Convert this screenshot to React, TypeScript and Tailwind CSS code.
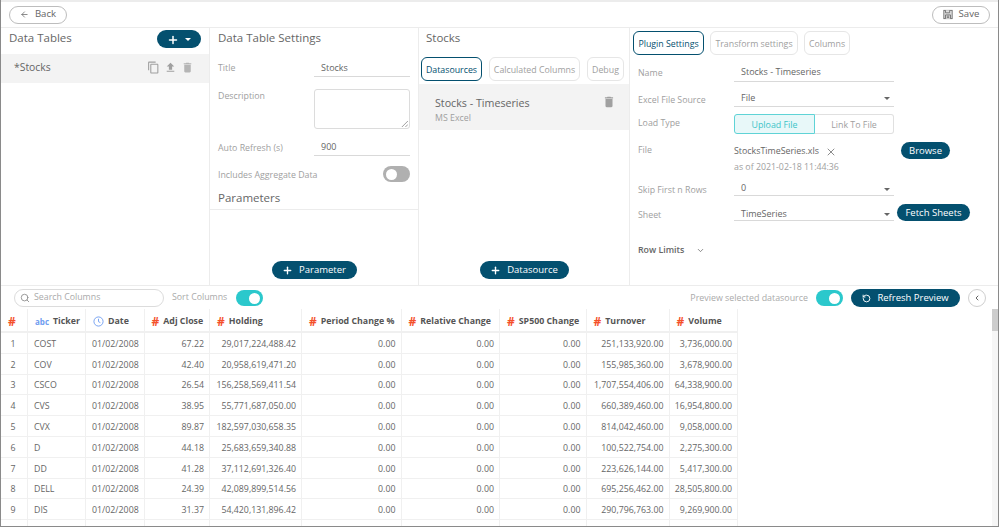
import React from "react";
import { Search, ArrowLeft, Plus, RotateCcw, ChevronLeft, ChevronDown, X } from "lucide-react";

const Mat = ({ d, className }: { d: string; className?: string }) => (
  <svg viewBox="0 0 24 24" className={className} fill="currentColor"><path d={d} /></svg>
);
const COPY = "M16 1H4c-1.1 0-2 .9-2 2v14h2V3h12V1zm3 4H8c-1.1 0-2 .9-2 2v14c0 1.1.9 2 2 2h11c1.1 0 2-.9 2-2V7c0-1.1-.9-2-2-2zm0 16H8V7h11v14z";
const UPLOAD = "M9 16h6v-6h4l-7-7-7 7h4zm-4 2h14v2H5z";
const TRASH = "M6 19c0 1.1.9 2 2 2h8c1.1 0 2-.9 2-2V7H6v12zM19 4h-3.5l-1-1h-5l-1 1H5v2h14V4z";

const Caret = ({ className = "" }: { className?: string }) => (
  <span className={`w-0 h-0 border-l-[3.5px] border-r-[3.5px] border-t-[3.5px] border-l-transparent border-r-transparent border-t-[#666] ${className}`} />
);

const Btn = ({ children, className = "" }: { children: React.ReactNode; className?: string }) => (
  <div className={`rounded-full bg-[#04506f] text-white text-[9.5px] whitespace-nowrap flex items-center justify-center shrink-0 pt-[1px] ${className}`}>{children}</div>
);

const Tab = ({ children, active, className = "" }: { children: React.ReactNode; active?: boolean; className?: string }) => (
  <div className={`h-[24px] rounded-[6px] flex items-center justify-center whitespace-nowrap text-[8.8px] shrink-0 pt-[3px] ${active ? "border-[1.5px] border-[#04506f] text-[#04506f]" : "border border-[#e6e6e6] text-[#a0a0a0]"} ${className}`}>{children}</div>
);

const Toggle = ({ on }: { on?: boolean }) => (
  <div className={`w-[27px] h-[16px] rounded-full flex items-center px-[3px] shrink-0 ${on ? "bg-[#2bc8cc] justify-end" : "bg-[#b0b0b0] justify-start"}`}>
    <div className="w-[11px] h-[11px] rounded-full bg-white" />
  </div>
);

const widths = [27, 58, 58.5, 65.5, 92, 99.5, 98.5, 86.5, 83, 68.5];
const heads = ["", "Ticker", "Date", "Adj Close", "Holding", "Period Change %", "Relative Change", "SP500 Change", "Turnover", "Volume"];
const rows = [
  ["1", "COST", "67.22", "29,017,224,488.42", "251,133,920.00", "3,736,000.00"],
  ["2", "COV", "42.40", "20,958,619,471.20", "155,985,360.00", "3,678,900.00"],
  ["3", "CSCO", "26.54", "156,258,569,411.54", "1,707,554,406.00", "64,338,900.00"],
  ["4", "CVS", "38.95", "55,771,687,050.00", "660,389,460.00", "16,954,800.00"],
  ["5", "CVX", "89.87", "182,597,030,658.35", "814,042,460.00", "9,058,000.00"],
  ["6", "D", "44.18", "25,683,659,340.88", "100,522,754.00", "2,275,300.00"],
  ["7", "DD", "41.28", "37,112,691,326.40", "223,626,144.00", "5,417,300.00"],
  ["8", "DELL", "24.39", "42,089,899,514.56", "695,256,462.00", "28,505,800.00"],
  ["9", "DIS", "31.37", "54,420,131,896.42", "290,796,763.00", "9,269,900.00"],
  ["", "", "", "", "", ""],
];

const HeadIcon = ({ i }: { i: number }) => {
  if (i === 1) return <span className="text-[#6f9df0] font-bold text-[8px] mr-[4px]">abc</span>;
  if (i === 2)
    return (
      <svg viewBox="0 0 12 12" className="w-[11px] h-[11px] mr-[4px] text-[#6f9df0]" fill="none" stroke="currentColor" strokeWidth="1">
        <circle cx="6" cy="6" r="5" />
        <path d="M6 3v3.2l2 1" />
      </svg>
    );
  return <span className={`text-[#f4502a] font-bold text-[12px] leading-none ${i === 0 ? "" : "mr-[4px]"}`}>#</span>;
};

const Label = ({ children, className = "" }: { children: React.ReactNode; className?: string }) => (
  <div className={`text-[8.8px] leading-[12px] text-[#a0a0a0] whitespace-nowrap shrink-0 ${className}`}>{children}</div>
);

const Field = ({ children, caret, className = "" }: { children: React.ReactNode; caret?: React.ReactNode; className?: string }) => (
  <div className={`border-b border-[#d9d9d9] flex items-center justify-between pl-[7px] pr-[4px] text-[9px] text-[#666] shrink-0 ${className}`}>
    <span>{children}</span>
    {caret}
  </div>
);

export default function App() {
  return (
    <div className="w-[999px] h-[527px] overflow-hidden bg-white border-l border-r border-b border-[#8a8a8a] flex flex-col text-[#555]" style={{ fontFamily: '"Open Sans", sans-serif' }}>
      {/* top bar */}
      <div className="h-[28px] shrink-0 border-t-2 border-b border-[#ececec] flex items-center justify-between pl-[8px] pr-[8px]">
        <div className="w-[58px] h-[18px] rounded-full border border-[#bdbdbd] flex items-center justify-center gap-[6px] text-[9.6px] text-[#666]">
          <ArrowLeft className="w-[9px] h-[9px]" strokeWidth={2} />
          Back
        </div>
        <div className="w-[58px] h-[18px] rounded-full border border-[#bdbdbd] flex items-center justify-center gap-[6px] text-[9.6px] text-[#666]">
          <svg viewBox="0 0 12 12" className="w-[10px] h-[11px]" fill="#e0e0e0" stroke="#666" strokeWidth="1">
            <rect x="1" y="1" width="10" height="10" />
            <path d="M3 1v3h5V1M3 11V6.5h6V11M4.5 8h3M4.5 9.5h3" />
          </svg>
          Save
        </div>
      </div>

      {/* panels */}
      <div className="h-[258px] shrink-0 flex border-b border-[#ececec]">
        <div className="w-[209px] shrink-0 border-r border-[#ececec] flex flex-col">
          <div className="h-[26px] flex items-start justify-between pl-[8px] pr-[8px]">
            <span className="text-[11.5px] leading-[20px] text-[#666]">Data Tables</span>
            <Btn className="w-[44px] h-[18px] mt-[2px] gap-[6px]">
              <Plus className="w-[12px] h-[12px]" strokeWidth={3} />
              <span className="w-0 h-0 border-l-[3px] border-r-[3px] border-t-[3px] border-l-transparent border-r-transparent border-t-white" />
            </Btn>
          </div>
          <div className="h-[29px] bg-[#f3f3f3] flex items-center justify-between pl-[13px] pr-[15px] pb-[1px]">
            <span className="text-[10.4px] text-[#666]">*Stocks</span>
            <div className="flex items-center gap-[4px] text-[#a0a0a0] -mt-[2px]">
              <Mat d={COPY} className="w-[13px] h-[13px]" />
              <Mat d={UPLOAD} className="w-[13px] h-[13px]" />
              <Mat d={TRASH} className="w-[13px] h-[13px] text-[#b5b5b5]" />
            </div>
          </div>
        </div>

        <div className="w-[209px] shrink-0 border-r border-[#ececec] flex flex-col">
          <div className="h-[20px] flex items-center pl-[8px] text-[11.5px] text-[#666]">Data Table Settings</div>
          <div className="pl-[8px] pr-[8px] flex flex-col">
            <div className="h-[24px] mt-[5px] flex items-center justify-between">
              <Label className="pt-[5px]">Title</Label>
              <Field className="w-[96px] h-[24px] pt-[6px]">Stocks</Field>
            </div>
            <div className="mt-[12px] flex justify-between">
              <Label className="pt-[1px]">Description</Label>
              <div className="w-[96px] h-[40px] border border-[#dcdcdc] rounded-[3px] relative">
                <svg viewBox="0 0 8 8" className="absolute right-[1px] bottom-[1px] w-[7px] h-[7px]" stroke="#777" strokeWidth="0.8">
                  <path d="M1 8L8 1M5 8L8 5" />
                </svg>
              </div>
            </div>
            <div className="mt-[3px] h-[24px] flex items-center justify-between">
              <Label className="pt-[8px]">Auto Refresh (s)</Label>
              <Field className="w-[96px] h-[24px] pt-[7px]">900</Field>
            </div>
            <div className="mt-[10px] flex items-center justify-between h-[16px]">
              <Label className="pt-[2px]">Includes Aggregate Data</Label>
              <Toggle />
            </div>
          </div>
          <div className="h-[24px] mt-[4px] border-b border-[#ececec] flex items-center pl-[8px] text-[11.5px] text-[#666]">Parameters</div>
          <div className="flex-1 flex items-end justify-center pb-[6px]">
            <Btn className="w-[85px] h-[18px] gap-[6px]">
              <Plus className="w-[11px] h-[11px]" strokeWidth={3} />
              Parameter
            </Btn>
          </div>
        </div>

        <div className="w-[211px] shrink-0 border-r border-[#ececec] flex flex-col">
          <div className="h-[20px] flex items-center pl-[7px] text-[11.5px] text-[#666]">Stocks</div>
          <div className="flex gap-[7px] pl-[2px] mt-[9px] h-[24px]">
            <Tab active className="w-[61px]">Datasources</Tab>
            <Tab className="w-[91px]">Calculated Columns</Tab>
            <Tab className="w-[37px]">Debug</Tab>
          </div>
          <div className="mt-[3px] h-[46px] bg-[#f3f3f3] flex justify-between pl-[16px] pr-[13px] pt-[11px]">
            <div className="flex flex-col">
              <span className="text-[10.7px] leading-[16px] text-[#666]">Stocks - Timeseries</span>
              <span className="text-[8.8px] leading-[13px] pt-[1px] text-[#a0a0a0]">MS Excel</span>
            </div>
            <Mat d={TRASH} className="w-[14px] h-[14px] text-[#a0a0a0]" />
          </div>
          <div className="flex-1 flex items-end justify-center pb-[6px]">
            <Btn className="w-[89px] h-[18px] gap-[6px]">
              <Plus className="w-[11px] h-[11px]" strokeWidth={3} />
              Datasource
            </Btn>
          </div>
        </div>

        <div className="flex-1 pl-[3px] pt-[3px] flex flex-col">
          <div className="flex gap-[6px] h-[24px]">
            <Tab active className="w-[71px]">Plugin Settings</Tab>
            <Tab className="w-[88px]">Transform settings</Tab>
            <Tab className="w-[46px]">Columns</Tab>
          </div>
          <div className="pl-[5px] flex flex-col">
            <div className="flex items-start h-[24px] mt-[3px]">
              <Label className="w-[96px] mt-[9px]">Name</Label>
              <Field className="w-[160px] h-[24px] pt-[4px]">Stocks - Timeseries</Field>
            </div>
            <div className="flex items-start h-[24px] mt-[1px]">
              <Label className="w-[96px] mt-[11px]">Excel File Source</Label>
              <Field caret={<Caret />} className="w-[160px] h-[24px] pt-[7px]">File</Field>
            </div>
            <div className="flex items-start h-[20px] mt-[7px]">
              <Label className="w-[96px] mt-[3px]">Load Type</Label>
              <div className="w-[160px] h-[20px] flex text-[8.85px] shrink-0">
                <div className="w-[81px] flex items-center justify-center bg-[#e8f8f9] border border-[#5fd3d6] rounded-l-[3px] text-[#3cc4c8] pt-[3px]">Upload File</div>
                <div className="flex-1 flex items-center justify-center border border-l-0 border-[#e0e0e0] rounded-r-[3px] text-[#a0a0a0] pt-[3px]">Link To File</div>
              </div>
            </div>
            <div className="flex items-start mt-[7px] h-[31px]">
              <Label className="w-[96px] mt-[3px]">File</Label>
              <div className="w-[167px] flex flex-col shrink-0">
                <div className="flex items-center text-[8.85px] text-[#666] gap-[6px] h-[19px] pt-[2px]">
                  StocksTimeSeries.xls
                  <X className="w-[12px] h-[12px]" strokeWidth={1.5} />
                </div>
                <span className="text-[8.8px] leading-[12px] text-[#a0a0a0] pt-[1px]">as of 2021-02-18 11:44:36</span>
              </div>
              <Btn className="w-[49px] h-[17px] mt-[1px]">Browse</Btn>
            </div>
            <div className="flex items-start h-[20px] mt-[4px]">
              <Label className="w-[96px] mt-[8px]">Skip First n Rows</Label>
              <Field caret={<Caret className="mt-[3px]" />} className="w-[160px] h-[20px] pt-[5px] pr-[1px]">0</Field>
            </div>
            <div className="flex items-start h-[21px] mt-[4px]">
              <Label className="w-[96px] mt-[9px]">Sheet</Label>
              <Field caret={<Caret />} className="w-[160px] h-[21px] pt-[8px]">TimeSeries</Field>
              <Btn className="w-[73px] h-[17px] ml-[3px] mt-[4px]">Fetch Sheets</Btn>
            </div>
            <div className="flex items-center mt-[23px] gap-[12px] text-[8.8px] leading-[12px] font-semibold text-[#666]">
              Row Limits
              <ChevronDown className="w-[9px] h-[9px]" />
            </div>
          </div>
        </div>
      </div>

      {/* preview toolbar */}
      <div className="h-[23px] shrink-0 flex items-center pl-[13px] pr-[12px] pt-[1px]">
        <div className="w-[150px] h-[18px] rounded-full border border-[#dcdcdc] flex items-center pl-[5px] gap-[4px] text-[8.8px] text-[#aaa]">
          <Search className="w-[10px] h-[10px] text-[#888]" />
          Search Columns
        </div>
        <span className="ml-[8px] text-[8.8px] text-[#aaa]">Sort Columns</span>
        <div className="ml-[9px]"><Toggle on /></div>
        <div className="flex-1" />
        <span className="text-[8.9px] text-[#aaa]">Preview selected datasource</span>
        <div className="ml-[8px]"><Toggle on /></div>
        <Btn className="ml-[8px] w-[109px] h-[18px] gap-[6px]">
          <RotateCcw className="w-[9px] h-[9px]" strokeWidth={2.5} />
          Refresh Preview
        </Btn>
        <div className="ml-[8px] w-[18px] h-[18px] rounded-full border border-[#cfcfcf] flex items-center justify-center text-[#666]">
          <ChevronLeft className="w-[8px] h-[8px]" strokeWidth={3} />
        </div>
      </div>

      {/* table */}
      <div className="flex-1 flex min-h-0">
        <div className="flex-1 min-w-0 overflow-hidden">
          <div className="flex h-[24px]">
            {heads.map((h, i) => (
              <div key={i} style={{ width: widths[i] }} className="shrink-0 border-r border-b-2 border-[#f0f0f0] flex items-center whitespace-nowrap text-[8.8px] font-bold text-[#555] pl-[7px] pt-[3px]">
                <HeadIcon i={i} />
                {h}
              </div>
            ))}
          </div>
          {rows.map((r, k) => {
            const cells = [r[0], r[1], r[0] ? "01/02/2008" : "", r[2], r[3], r[0] ? "0.00" : "", r[0] ? "0.00" : "", r[0] ? "0.00" : "", r[4], r[5]];
            return (
              <div key={k} className="flex h-[20.8px]">
                {cells.map((c, i) => (
                  <div key={i} style={{ width: widths[i] }} className={`shrink-0 border-r border-b border-[#f0f0f0] flex items-center whitespace-nowrap text-[8.8px] text-[#666] pt-[3px] ${i === 0 ? "justify-center pr-[2px]" : i < 3 ? "pl-[6px]" : "justify-end pr-[5px]"}`}>
                    {c}
                  </div>
                ))}
              </div>
            );
          })}
        </div>
        <div className="w-[6px] shrink-0 bg-[#f6f6f6]">
          <div className="h-[22px] bg-[#cdcdcd]" />
        </div>
      </div>
    </div>
  );
}
